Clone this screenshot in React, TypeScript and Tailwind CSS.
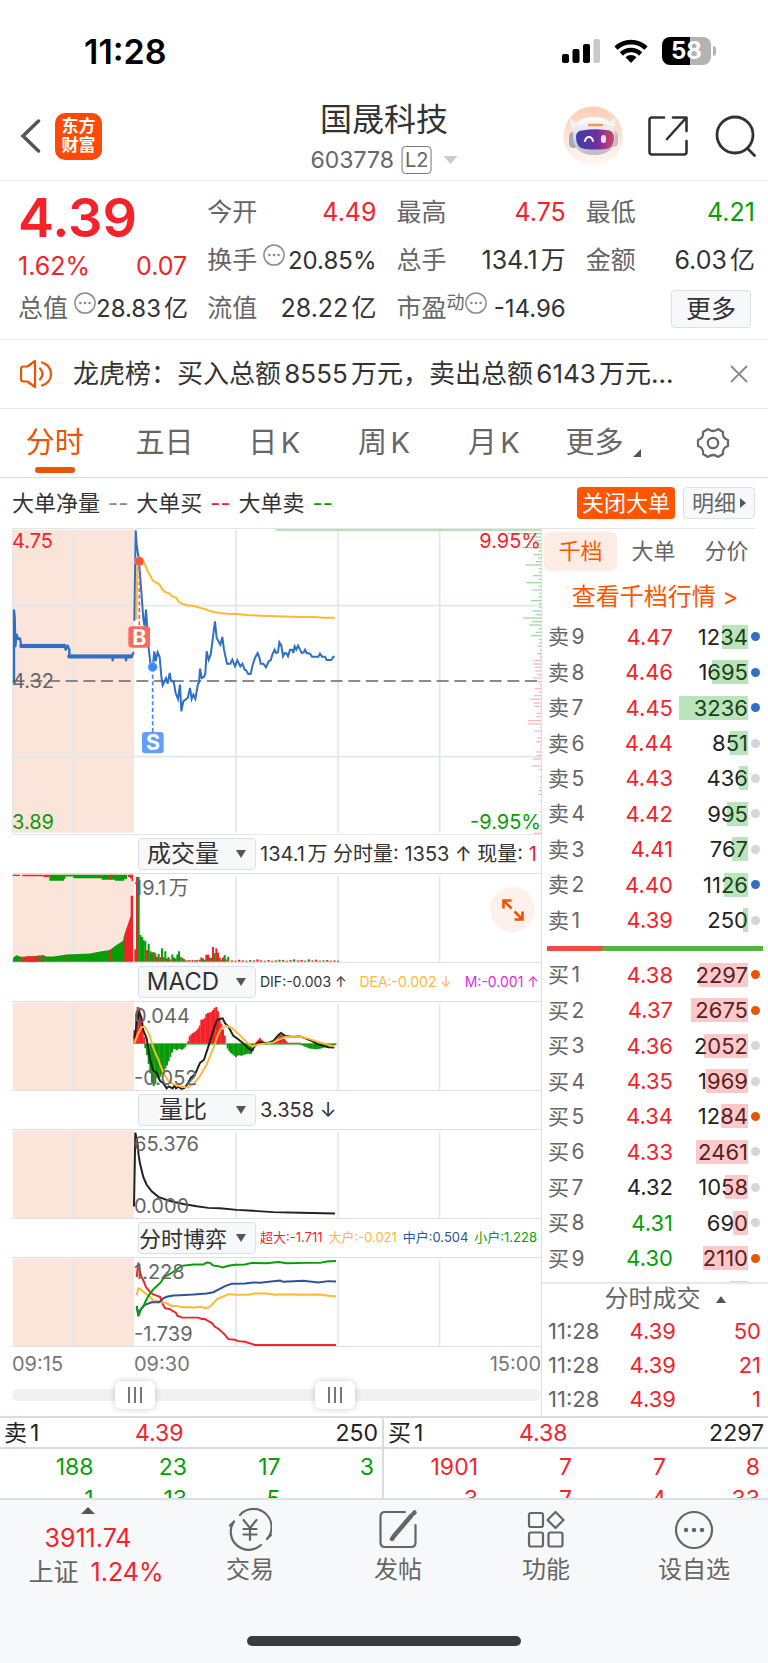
import { ReactNode } from "react";

type Point = [number, number];

const stats = [
  [
    { label: "今开", value: "4.49", color: "text-[#f5222a]" },
    { label: "换手", value: "20.85%", color: "text-[#333]", hint: true },
    { label: "流值", value: "28.22亿", color: "text-[#333]" },
  ],
  [
    { label: "最高", value: "4.75", color: "text-[#f5222a]" },
    { label: "总手", value: "134.1万", color: "text-[#333]" },
    { label: "市盈", sup: "动", value: "-14.96", color: "text-[#333]", hint: true },
  ],
  [
    { label: "最低", value: "4.21", color: "text-[#089d08]" },
    { label: "金额", value: "6.03亿", color: "text-[#333]" },
  ],
];

const periods = ["分时", "五日", "日K", "周K", "月K"];

const BLUE = "bg-[#2f6fc4]";
const ORANGE = "bg-[#ea5504]";
const GRAY = "bg-[#d3d6dc]";
const RED_TEXT = "text-[#f5222a]";
const GREEN_TEXT = "text-[#089d08]";

const sells = [
  { name: "卖9", price: "4.47", qty: 1234, color: RED_TEXT, dot: BLUE },
  { name: "卖8", price: "4.46", qty: 1695, color: RED_TEXT, dot: BLUE },
  { name: "卖7", price: "4.45", qty: 3236, color: RED_TEXT, dot: BLUE },
  { name: "卖6", price: "4.44", qty: 851, color: RED_TEXT, dot: GRAY },
  { name: "卖5", price: "4.43", qty: 436, color: RED_TEXT, dot: GRAY },
  { name: "卖4", price: "4.42", qty: 995, color: RED_TEXT, dot: GRAY },
  { name: "卖3", price: "4.41", qty: 767, color: RED_TEXT, dot: GRAY },
  { name: "卖2", price: "4.40", qty: 1126, color: RED_TEXT, dot: BLUE },
  { name: "卖1", price: "4.39", qty: 250, color: RED_TEXT, dot: GRAY },
];

const buys = [
  { name: "买1", price: "4.38", qty: 2297, color: RED_TEXT, dot: ORANGE },
  { name: "买2", price: "4.37", qty: 2675, color: RED_TEXT, dot: ORANGE },
  { name: "买3", price: "4.36", qty: 2052, color: RED_TEXT, dot: GRAY },
  { name: "买4", price: "4.35", qty: 1969, color: RED_TEXT, dot: GRAY },
  { name: "买5", price: "4.34", qty: 1284, color: RED_TEXT, dot: ORANGE },
  { name: "买6", price: "4.33", qty: 2461, color: RED_TEXT, dot: GRAY },
  { name: "买7", price: "4.32", qty: 1058, color: "text-[#222]", dot: GRAY },
  { name: "买8", price: "4.31", qty: 690, color: GREEN_TEXT, dot: GRAY },
  { name: "买9", price: "4.30", qty: 2110, color: GREEN_TEXT, dot: ORANGE },
];

const trades = [
  { time: "11:28", price: "4.39", qty: 50 },
  { time: "11:28", price: "4.39", qty: 21 },
  { time: "11:28", price: "4.39", qty: 1 },
];

// Chart data, three units to a pixel.
const preMarket =
  "42,490 42,272 44,292 46,380 50,345 54,358 60,356 64,379 195,379 197,390 203,378 208,390 208,410 337,410 338,422 340,410 377,410 378,422 380,410 395,410 400,400 403,400";
const priceLine =
  "403,303 407,32 410,75 417,125 424,215 430,300 434,320 438,270 442,330 446,385 452,440 458,445 463,395 467,425 473,398 479,412 484,470 488,497 498,475 503,492 509,460 513,484 521,486 527,520 534,538 540,495 544,575 550,545 563,535 570,505 575,538 580,525 586,538 594,492 597,490 600,447 605,475 612,472 616,460 620,395 626,420 632,405 638,360 645,305 650,355 661,375 667,352 672,390 681,432 691,432 697,420 705,440 712,422 721,440 727,432 734,450 738,452 745,463 752,463 758,435 765,415 773,400 778,412 782,432 790,432 798,443 806,425 812,422 818,402 824,390 828,400 834,398 838,368 844,378 849,410 854,400 860,402 864,410 870,390 877,390 880,400 884,380 889,390 894,378 900,390 905,400 911,398 915,390 920,400 930,402 936,411 955,411 960,402 966,411 975,411 980,421 994,421 1000,411 1004,411";
const averageLine =
  "409,300 412,140 415,108 430,125 445,158 458,182 470,190 478,194 485,206 495,217 508,222 518,231 528,234 535,245 545,252 560,256 585,260 605,266 615,268 625,272 640,277 660,280 685,282 710,283 740,286 780,288 830,290 900,292 940,292 970,294 1004,294";

// [y, length] of the chips profile drawn from the right edge
const profileGreen: Point[] = [
  [31, 796], [42, 100], [52, 30], [63, 20], [73, 12], [84, 56], [94, 8], [105, 22], [115, 10], [126, 16],
  [136, 46], [147, 6], [158, 7], [168, 24], [179, 7], [189, 44], [200, 8], [211, 26], [221, 6], [232, 8],
  [243, 31], [253, 8], [263, 6], [274, 26], [285, 14], [295, 54], [306, 27], [316, 35], [327, 8], [338, 16],
  [348, 30], [359, 6], [370, 5], [380, 10], [391, 4], [402, 11], [412, 3],
];
const profileRed: Point[] = [
  [422, 22], [433, 25], [443, 19], [454, 18], [465, 12], [475, 24], [486, 10], [496, 4], [507, 19], [517, 7],
  [528, 21], [539, 31], [550, 22], [560, 20], [570, 3], [581, 13], [591, 14], [603, 40], [613, 38], [623, 3],
  [634, 20], [645, 3], [655, 10], [666, 16], [676, 3], [686, 3], [697, 15], [708, 13], [718, 25], [739, 27],
  [750, 7], [771, 3], [782, 3], [803, 5], [813, 8], [824, 9], [845, 3], [876, 3], [919, 3], [930, 4], [941, 21],
];

// [x, top, is red]
const volumes: [number, number, number][] = [
  [403, 360, 1], [408, 138, 1], [413, 138, 0], [418, 316, 0], [423, 322, 0], [428, 332, 0], [433, 335, 0],
  [438, 363, 1], [443, 343, 0], [448, 366, 0], [453, 370, 0], [458, 368, 1], [463, 372, 0], [468, 383, 1],
  [473, 374, 0], [478, 384, 1], [483, 357, 0], [488, 384, 0], [493, 366, 0], [498, 388, 1], [503, 384, 0],
  [508, 391, 1], [514, 376, 0], [519, 385, 0], [524, 388, 1], [529, 376, 0], [534, 366, 0], [539, 384, 0],
  [544, 386, 1], [549, 390, 0], [554, 394, 0], [560, 394, 1], [566, 393, 1], [575, 393, 1], [582, 394, 0],
  [588, 393, 1], [596, 392, 1], [601, 385, 1], [606, 388, 0], [611, 392, 0], [616, 377, 1], [621, 376, 1],
  [626, 385, 1], [631, 386, 0], [636, 353, 1], [641, 372, 0], [646, 357, 1], [651, 370, 1], [656, 386, 1],
  [661, 391, 0], [666, 385, 1], [671, 378, 0], [676, 391, 1], [682, 383, 0],
];
const tailVolumes = [3, 2, 5, 3, 2, 4, 3, 6, 3, 2, 4, 2, 3, 5, 4, 2, 4, 6, 3, 4, 2, 6, 3, 5, 2, 3, 4, 2, 3, 2];

const macdAreas: { color: string; points: Point[] }[] = [
  { color: "#f5222a", points: [[403, 600], [408, 550], [413, 528], [418, 530], [423, 560], [428, 590], [433, 620]] },
  {
    color: "#089d08",
    points: [
      [436, 655], [442, 680], [452, 738], [457, 765], [460, 772], [466, 765], [471, 745], [476, 750], [492, 725],
      [500, 710], [508, 690], [516, 668], [522, 655], [530, 662], [538, 655], [545, 660], [553, 655], [560, 645],
    ],
  },
  {
    color: "#f5222a",
    points: [
      [564, 634], [570, 615], [580, 608], [590, 600], [598, 590], [603, 567], [612, 567], [620, 548], [635, 543],
      [645, 530], [650, 528], [655, 545], [660, 565], [667, 590], [673, 612], [678, 630],
    ],
  },
  {
    color: "#089d08",
    points: [[683, 656], [690, 668], [700, 675], [708, 682], [715, 676], [725, 678], [740, 672], [755, 672], [762, 655]],
  },
  {
    color: "#f5222a",
    points: [[765, 640], [773, 630], [780, 624], [788, 632], [796, 638], [815, 637], [830, 628], [842, 612], [850, 618], [855, 628], [863, 638], [900, 638]],
  },
  { color: "#089d08", points: [[905, 645], [915, 650], [930, 656], [950, 658], [965, 655], [980, 650], [1008, 644]] },
];
const difLine =
  "403,625 410,580 418,545 424,560 430,600 440,625 450,690 460,725 470,730 480,755 490,762 500,778 506,772 518,778 523,770 528,778 535,773 545,780 553,777 562,765 573,745 585,735 600,700 612,690 625,650 640,600 650,570 658,565 668,563 675,578 685,588 700,617 712,625 730,640 745,655 755,662 765,648 778,636 800,640 820,632 835,615 843,608 855,617 880,620 897,618 912,623 935,632 955,643 985,652 1003,653";
const deaLine =
  "403,640 412,615 425,590 435,590 447,610 460,655 475,690 490,730 505,755 520,765 540,772 562,775 580,765 600,740 620,705 640,655 655,610 665,592 680,586 695,592 715,610 740,637 758,650 775,643 800,640 820,637 840,627 855,620 897,619 920,624 950,634 980,643 1005,650";
const ratioLine =
  "402,352 406,125 412,155 416,195 420,220 430,262 440,285 455,305 475,322 510,335 550,344 590,351 625,356 660,357 710,362 760,365 820,369 900,371 1005,373";

const gameLines = [
  {
    color: "#f5222a",
    points:
      "410,560 415,515 420,545 425,560 430,570 438,590 450,605 458,612 472,617 480,620 487,640 495,655 510,658 520,665 527,668 532,678 547,684 595,684 605,688 615,688 625,695 635,700 645,712 655,718 668,730 675,737 685,750 705,752 715,756 735,758 750,763 765,768 1008,768",
  },
  {
    color: "#ffb833",
    points:
      "410,615 415,594 422,597 430,605 440,612 450,620 460,632 475,633 485,637 500,640 515,648 530,648 545,652 560,652 580,653 605,651 615,655 628,652 640,640 652,626 668,620 685,612 710,614 745,614 765,610 800,610 825,614 870,612 900,614 960,613 985,617 1008,619",
  },
  {
    color: "#2b549c",
    points:
      "410,648 415,670 425,655 435,645 455,637 478,637 490,625 500,620 520,616 540,615 580,613 620,610 640,606 655,598 675,587 695,580 735,579 760,576 780,577 840,570 850,574 910,571 955,576 985,572 1008,573",
  },
  {
    color: "#089d08",
    points:
      "410,650 415,680 422,660 432,645 440,627 450,610 462,595 475,583 483,575 492,560 510,550 525,540 545,525 580,521 610,521 620,515 630,516 640,524 655,526 668,530 685,525 705,522 735,521 755,516 800,517 835,513 860,517 920,516 960,516 980,512 1008,510",
  },
];

function heightAt(points: Point[], x: number) {
  for (let i = 1; i < points.length; i++) {
    const [x0, y0] = points[i - 1];
    const [x1, y1] = points[i];
    if (x <= x1) return y0 + ((y1 - y0) * (x - x0)) / (x1 - x0);
  }
  return points[points.length - 1][1];
}

function MacdBars({ color, points }: { color: string; points: Point[] }) {
  const bars = [];
  const end = points[points.length - 1][0];
  for (let x = points[0][0]; x <= end; x += 5) {
    const y = heightAt(points, x);
    bars.push(
      <rect key={x} x={x - 3} y={Math.min(y, 641)} width={6} height={Math.max(Math.abs(y - 641), 2)} fill={color} />
    );
  }
  return <g>{bars}</g>;
}

function Grid({ top, bottom }: { top: number; bottom: number }) {
  return (
    <>
      <rect x={38} y={top + 1} width={364} height={bottom - top} fill="#fbe5da" />
      <g stroke="#e3e6ec" strokeWidth={5}>
        {[219, 708, 1014, 1319].map((x) => (
          <line key={x} x1={x} x2={x} y1={top + 8} y2={bottom} />
        ))}
      </g>
    </>
  );
}

function SubChart({ top, high, low, children }: { top: number; high: string; low?: string; children: ReactNode }) {
  return (
    <div className="relative h-[90px] border-y border-[#dcdfe6]">
      <svg
        className="block w-full h-full overflow-visible"
        viewBox={`36 ${top} 1587 270`}
        preserveAspectRatio="none"
        aria-hidden="true"
      >
        <Grid top={top} bottom={top + 270} />
        {children}
      </svg>
      <span className="absolute left-[122px] top-0.5 text-xl leading-6 text-[#666]">{high}</span>
      {low && <span className="absolute left-[122px] bottom-0 text-xl leading-6 text-[#666]">{low}</span>}
    </div>
  );
}

function Indicator({ name, children }: { name: string; children: ReactNode }) {
  return (
    <div className="flex items-center gap-1 h-[38px] pl-[126px] whitespace-nowrap">
      <div className="relative shrink-0">
        <select
          aria-label={name}
          className={`block appearance-none w-[118px] h-8 pr-7 border border-[#dcdfe6] rounded bg-[#f7f8fa] text-[#333] [text-align-last:center] ${
            name.length > 4 || name === "分时博弈" ? "text-[22px]" : "text-2xl leading-none"
          }`}
        >
          <option>{name}</option>
        </select>
        <svg viewBox="0 0 10 10" className="absolute right-2.5 top-[11px] w-2.5 h-2.5 pointer-events-none" aria-hidden="true">
          <path d="M0 1h10L5 9z" fill="#555" />
        </svg>
      </div>
      {children}
    </div>
  );
}

function Hint() {
  return (
    <svg viewBox="0 0 24 24" className="w-[22px] h-[22px] shrink-0 -mt-3" aria-hidden="true">
      <circle cx="12" cy="12" r="11" fill="none" stroke="#8a8a8a" strokeWidth="1.6" />
      <g fill="#8a8a8a">
        <circle cx="7" cy="12" r="1.4" />
        <circle cx="12" cy="12" r="1.4" />
        <circle cx="17" cy="12" r="1.4" />
      </g>
    </svg>
  );
}

function StatusBar() {
  return (
    <div className="flex items-center justify-between h-[102px] pl-[84px] pr-[52px]">
      <span className="text-[34px] font-semibold text-black">11:28</span>
      <div className="flex items-center gap-[14px]">
        <svg viewBox="0 0 38 24" className="w-[38px] h-6" aria-hidden="true">
          <rect x="0" y="15" width="7" height="9" rx="2" />
          <rect x="10.500" y="10" width="7" height="14" rx="2" />
          <rect x="21" y="5" width="7" height="19" rx="2" />
          <rect x="31.500" y="0" width="6.500" height="24" rx="2" fill="#c9c9c9" />
        </svg>
        <svg viewBox="0 0 34 24" className="w-[34px] h-6" aria-hidden="true">
          <g fill="none" stroke="#000" strokeWidth="4.600">
            <path d="M2 9.200a21.500 21.500 0 0 1 30 0" />
            <path d="M7.400 15a13.600 13.600 0 0 1 19.200 0" />
          </g>
          <path d="M11.500 18.200a8 8 0 0 1 11 0L17 24z" />
        </svg>
        <div className="flex items-center gap-0.5">
          <span className="flex items-center justify-center w-[49px] h-7 rounded-lg bg-linear-to-r from-black from-57% to-[#b3b3b3] to-57% text-white text-2xl font-bold">
            58
          </span>
          <span className="w-[3px] h-2.5 rounded-r-full bg-[#b3b3b3]" />
        </div>
      </div>
    </div>
  );
}

function Robot() {
  return (
    <svg viewBox="0 0 60 60" className="w-[60px] h-[60px]" aria-hidden="true">
      <defs>
        <linearGradient id="halo" x1="0" y1="0" x2="0" y2="1">
          <stop offset="0" stopColor="#ffcdb4" />
          <stop offset="1" stopColor="#fff8f4" />
        </linearGradient>
        <linearGradient id="visor" x1="0" y1="0" x2="1" y2="0">
          <stop offset="0" stopColor="#3b3fae" />
          <stop offset="0.550" stopColor="#6d2fa0" />
          <stop offset="1" stopColor="#d8455d" />
        </linearGradient>
        <linearGradient id="shell" x1="0" y1="0" x2="0" y2="1">
          <stop offset="0" stopColor="#ffffff" />
          <stop offset="1" stopColor="#b9b9c8" />
        </linearGradient>
      </defs>
      <circle cx="30" cy="30" r="29.500" fill="url(#halo)" />
      <path d="M8 12q-3 9 4 12l5-7q-7 0-9-5zM51 11q4 9-3 12l-5-7q7 0 8-5z" fill="#f7f2f2" />
      <rect x="6" y="26" width="9" height="16" rx="4.500" fill="#a9a9bb" />
      <rect x="46" y="25" width="9" height="16" rx="4.500" fill="#c2bccb" />
      <path d="M10 31Q9 11 31 11q20 0 21 18 1 19-20 20-21 0-22-18z" fill="url(#shell)" />
      <path d="M13 31q0-6 6-6.500 12-2 24-0.500 8 0 8 8 0 10-8 11-11 1-21 0-9-1-9-12z" fill="url(#visor)" />
      <path d="M22 35q1-4 4-4 3 0 4 4" fill="none" stroke="#fff" strokeWidth="2" strokeLinecap="round" />
      <rect x="38" y="29" width="5" height="8" rx="2.500" fill="#f3d5ff" />
      <path d="M26 19h13" stroke="#f19a4c" strokeWidth="2.500" strokeLinecap="round" />
    </svg>
  );
}

function Header() {
  return (
    <header className="relative flex items-center justify-between h-[79px] pb-[10px] pl-5 pr-[11px] border-b border-[#e6e6e6]">
      <div className="flex items-center gap-[14px]">
        <button type="button" aria-label="返回">
          <svg viewBox="0 0 21 34" className="w-[21px] h-[34px]" fill="none" stroke="#555" strokeWidth="3.500" strokeLinecap="round">
            <path d="M18.500 2L3 17l15.500 15" />
          </svg>
        </button>
        <a
          href="#home"
          className="flex flex-col items-center justify-center w-[47px] h-[47px] rounded-[10px] bg-[#ff4a05] text-white text-[17px] leading-[19px] font-bold"
        >
          <span>东方</span>
          <span>财富</span>
        </a>
      </div>
      <div className="absolute left-1/2 top-0 -translate-x-1/2 flex flex-col items-center">
        <h1 className="text-[32px] leading-9 text-[#333]">国晟科技</h1>
        <div className="flex items-center gap-2 h-11 text-[23px] text-[#666]">
          <span>603778</span>
          <span className="flex items-center h-7 px-0.5 border border-[#777] rounded text-[20px]">L2</span>
          <svg viewBox="0 0 14 8" className="ml-1 w-[14px] h-2" aria-hidden="true">
            <path d="M0 0h14L7 8z" fill="#ccc" />
          </svg>
        </div>
      </div>
      <div className="flex items-center">
        <Robot />
        <button type="button" aria-label="分享" className="ml-6">
          <svg viewBox="0 0 42 42" className="w-[42px] h-[42px]" fill="none" stroke="#333" strokeWidth="2.600" strokeLinecap="round" strokeLinejoin="round">
            <path d="M17 2.500H5Q2.500 2.500 2.500 5v32q0 2.500 2.500 2.500h32q2.500 0 2.500-2.500V26" />
            <path d="M26 2.500h13.500V16M39 3L20 24" />
          </svg>
        </button>
        <button type="button" aria-label="搜索" className="ml-[26px]">
          <svg viewBox="0 0 42 42" className="w-[42px] h-[42px]" fill="none" stroke="#333" strokeWidth="2.800" strokeLinecap="round">
            <circle cx="20" cy="20" r="18" />
            <path d="M32.500 33.500l7 7" />
          </svg>
        </button>
      </div>
    </header>
  );
}

function Quote() {
  return (
    <section className="grid grid-cols-4 gap-5 pt-2 pb-1.5 pl-[18px] pr-[13px] border-b border-[#e6e6e6] text-[25px] whitespace-nowrap">
      <div>
        <div className="flex items-center h-14 text-[54px] font-semibold text-[#f5222a]">4.39</div>
        <div className="flex items-center justify-between h-11 text-[#f5222a]">
          <span>1.62%</span>
          <span>0.07</span>
        </div>
        <div className="flex items-center h-10">
          <span className="text-[#666]">总值</span>
          <span className="ml-1.5 flex">
            <Hint />
          </span>
          <span className="ml-auto text-2xl text-[#333]">28.83亿</span>
        </div>
      </div>
      {stats.map((column, i) => (
        <dl key={i}>
          {column.map((item) => (
            <div key={item.label} className="flex items-center h-12">
              <dt className="flex items-center text-[#666]">
                {item.label}
                {item.sup && <span className="text-lg -mt-3">{item.sup}</span>}
              </dt>
              {item.hint && (
                <span className={item.sup ? "flex" : "ml-1.5 flex"}>
                  <Hint />
                </span>
              )}
              <dd className={item.hint ? `ml-auto text-2xl ${item.color}` : `ml-auto ${item.color}`}>{item.value}</dd>
            </div>
          ))}
          {i === 2 && (
            <div className="flex items-center justify-end h-12 pr-1">
              <button type="button" className="w-20 h-[38px] border border-[#dcdfe6] rounded bg-[#f7f8fa] leading-none text-[#333]">
                更多
              </button>
            </div>
          )}
        </dl>
      ))}
    </section>
  );
}

function Notice() {
  return (
    <div className="flex items-center h-[69px] pl-5 pr-5 border-b border-[#e6e6e6]">
      <svg viewBox="0 0 34 30" className="shrink-0 w-[34px] h-[30px]" fill="none" stroke="#ea5504" strokeWidth="2.200" strokeLinejoin="round" strokeLinecap="round" aria-hidden="true">
        <path d="M15 2L7.500 7.500H3.500Q1 7.500 1 10v10q0 2.500 2.500 2.500h4L15 28z" />
        <path d="M20 9.500q5 5.500 0 11M22 3.500q9 3 9 11.500t-9 11.500" />
      </svg>
      <p className="ml-[19px] flex-1 truncate text-[26px] leading-9 text-[#333]">龙虎榜：买入总额8555万元，卖出总额6143万元...</p>
      <button type="button" aria-label="关闭">
        <svg viewBox="0 0 18 18" className="w-[18px] h-[18px]" stroke="#888" strokeWidth="1.800">
          <path d="M1 1l16 16M17 1L1 17" />
        </svg>
      </button>
    </div>
  );
}

function PeriodTabs() {
  return (
    <nav className="grid grid-cols-7 h-[69px] border-b border-[#d8dbe2] text-[29px] text-[#666]">
      {periods.map((name, i) => (
        <button key={name} type="button" className={i === 0 ? "relative text-[#ea5504]" : "relative"}>
          {name}
          {i === 0 && <span className="absolute left-1/2 bottom-1 -translate-x-1/2 w-10 h-1.5 rounded-full bg-[#ea5504]" />}
        </button>
      ))}
      <button type="button" className="flex items-center justify-center gap-2.5">
        更多
        <svg viewBox="0 0 8 8" className="mt-5 w-2 h-2" aria-hidden="true">
          <path d="M8 0v8H0z" fill="#555" />
        </svg>
      </button>
      <button type="button" aria-label="设置" className="flex items-center justify-center">
        <svg viewBox="0 0 34 32" className="w-[34px] h-8" fill="none" stroke="#666" strokeWidth="2.200" strokeLinejoin="round">
          <path d="M12 2q5 4 10 0l5 3q-1 6 5 8v6q-6 2-5 8l-5 3q-5-4-10 0l-5-3q1-6-5-8v-6q6-2 5-8z" />
          <circle cx="17" cy="16" r="5.200" />
        </svg>
      </button>
    </nav>
  );
}

function BigOrders() {
  return (
    <div className="flex items-center justify-between h-[50px] pl-3 pr-[13px] text-[22px] text-[#333]">
      <div className="flex gap-2">
        <span>大单净量</span>
        <span className="text-[#888]">--</span>
        <span>大单买</span>
        <span className="text-[#f5222a]">--</span>
        <span>大单卖</span>
        <span className="text-[#089d08]">--</span>
      </div>
      <div className="flex gap-2">
        <button type="button" className="w-[98px] h-8 rounded bg-[#ff5500] leading-none text-white">
          关闭大单
        </button>
        <button type="button" className="flex items-center justify-center gap-1 w-[72px] h-8 border border-[#dcdfe6] rounded bg-[#f7f8fa] leading-none text-[#666]">
          明细
          <svg viewBox="0 0 6 10" className="w-1.5 h-2.5" aria-hidden="true">
            <path d="M0 0l6 5-6 5z" fill="#555" />
          </svg>
        </button>
      </div>
    </div>
  );
}

function PriceChart() {
  return (
    <div className="relative h-[307px] pt-px border-b border-[#e6e8ee] text-xl leading-6">
      <svg className="block w-full h-full" viewBox="36 28 1587 915" preserveAspectRatio="none" aria-hidden="true">
        <rect x={38} y={30} width={364} height={909} fill="#fbe5da" />
        <g stroke="#e3e6ec" strokeWidth={5}>
          {[219, 708, 1014, 1319].map((x) => (
            <line key={x} x1={x} x2={x} y1={30} y2={939} />
          ))}
          <path d="M38 30V940M38 258H1623M38 711H1623" />
        </g>
        <g strokeWidth={4}>
          {profileGreen.map(([y, length]) => (
            <line key={y} x1={1623 - length} x2={1623} y1={y} y2={y} stroke="#9fdb9f" />
          ))}
          {profileRed.map(([y, length]) => (
            <line key={y} x1={1623 - length} x2={1623} y1={y} y2={y} stroke="#fbb9bb" />
          ))}
        </g>
        <line x1={38} x2={1623} y1={484} y2={484} stroke="#666" strokeWidth={4} strokeDasharray="36 17" />
        <polyline points={averageLine} fill="none" stroke="#ffb833" strokeWidth={6} />
        <polyline points={preMarket} fill="none" stroke="#2f6fc4" strokeWidth={7} strokeLinejoin="round" />
        <path d="M64 379H195M208 410H395" stroke="#2f6fc4" strokeWidth={13} strokeDasharray="1 7" strokeLinecap="round" />
        <polyline points={priceLine} fill="none" stroke="#2f6fc4" strokeWidth={6} />
        <line x1={418} x2={418} y1={125} y2={322} stroke="#fa5a4b" strokeWidth={5} strokeDasharray="12 8" />
        <line x1={458} x2={458} y1={445} y2={640} stroke="#3a88fb" strokeWidth={5} strokeDasharray="12 8" />
        <circle cx={418} cy={125} r={14} fill="#f8562f" stroke="#ffb1a6" strokeWidth={2} />
        <circle cx={458} cy={442} r={14} fill="#3a88fb" stroke="#b5d2ff" strokeWidth={2} />
        <rect x={385} y={320} width={65} height={64} rx={10} fill="#fb6a5c" />
        <rect x={426} y={637} width={65} height={64} rx={10} fill="#60a0fc" />
        <g fill="#fff" fontSize={64} fontWeight={700} textAnchor="middle">
          <text x={418} y={375}>B</text>
          <text x={459} y={692}>S</text>
        </g>
      </svg>
      <span className="absolute left-0 top-px text-[#f5222a]">4.75</span>
      <span className="absolute right-0 top-px text-[#f5222a]">9.95%</span>
      <span className="absolute left-0 top-1/2 -translate-y-1/2 text-[#666]">4.32</span>
      <span className="absolute left-0 bottom-0 text-[#089d08]">3.89</span>
      <span className="absolute right-0 bottom-0 text-[#089d08]">-9.95%</span>
    </div>
  );
}

function VolumeChart() {
  return (
    <div className="relative">
      <SubChart top={129} high="19.1万">
        <path d="M38 131h22v4H38zM67 131h62v5H67zM130 131h18v7h-18z" fill="#f5222a" />
        <path d="M125 131h23v19h44v-6h4v-7h24v5h85v5h40v3h28v-6h8V131z" fill="#089d08" />
        <path d="M383 131h16v20h-4v-8h-5v-5h-7zM330 131h3v16h-3z" fill="#f5222a" />
        <path
          d="M38 398l2-13 10-7 15 6 65-6 10 4h20l40-6 70-3 30-6 30-5 15-12 15-10 10-7 3-18 7-20v103z"
          fill="#089d08"
        />
        <path
          d="M66 383h8v15h-8zM78 381h28v17H78zM109 381h3v17h-3zM115 379h4v19h-4zM122 380h3v18h-3zM127 378h5v20h-5zM194 377h3v21h-3zM329 361h4v37h-4zM371 320h3v78h-3zM378 300l14-42v-62h7v202h-21z"
          fill="#f5222a"
        />
        {volumes.map(([x, y, red]) => (
          <rect key={x} x={x} y={y} width={6} height={398 - y} fill={red ? "#f5222a" : "#089d08"} />
        ))}
        {tailVolumes.map((height, i) => (
          <rect key={i} x={692 + i * 11} y={397 - height} width={7} height={height + 1} fill={i % 4 === 1 ? "#089d08" : "#f5222a"} />
        ))}
      </SubChart>
      <button type="button" aria-label="全屏" className="absolute right-1.5 top-[14px] flex items-center justify-center w-[45px] h-[45px] rounded-full bg-[#fef0ea]">
        <svg viewBox="0 0 24 24" className="w-6 h-6" fill="none" stroke="#ea5504" strokeWidth="2.600">
          <path d="M2.500 10.500v-8h8M2.500 2.500l8 8M21.500 13.500v8h-8M21.500 21.500l-8-8" />
        </svg>
      </button>
    </div>
  );
}

const rangeClass =
  "absolute inset-x-0 top-0 w-full h-7 appearance-none bg-transparent pointer-events-none [&::-webkit-slider-thumb]:appearance-none [&::-webkit-slider-thumb]:pointer-events-auto [&::-webkit-slider-thumb]:w-10 [&::-webkit-slider-thumb]:h-7 [&::-webkit-slider-thumb]:rounded-md [&::-webkit-slider-thumb]:shadow-[0_0_6px_rgba(0,0,0,0.2)] [&::-webkit-slider-thumb]:bg-white [&::-webkit-slider-thumb]:bg-[repeating-linear-gradient(90deg,#777_0_2px,transparent_2px_6px)] [&::-webkit-slider-thumb]:bg-size-[14px_16px] [&::-webkit-slider-thumb]:bg-center [&::-webkit-slider-thumb]:bg-no-repeat";

function Charts() {
  return (
    <div className="flex-1 min-w-0 pl-3 text-[#333]">
      <PriceChart />
      <Indicator name="成交量">
        <span className="flex-1 overflow-hidden text-xl">
          134.1万 分时量: 1353 ↑ 现量: <span className="text-[#f5222a]">1</span>
        </span>
      </Indicator>
      <VolumeChart />
      <Indicator name="MACD">
        <div className="flex flex-1 justify-between pr-0.5 text-sm">
          <span>DIF:-0.003 ↑</span>
          <span className="text-[#ffb833]">DEA:-0.002 ↓</span>
          <span className="text-[#e428e4]">M:-0.001 ↑</span>
        </div>
      </Indicator>
      <SubChart top={513} high="0.044" low="-0.052">
        <line x1={433} x2={1010} y1={642} y2={642} stroke="#089d08" strokeWidth={3} />
        {macdAreas.map((area, i) => (
          <MacdBars key={i} {...area} />
        ))}
        <polyline points={difLine} fill="none" stroke="#222" strokeWidth={6} />
        <polyline points={deaLine} fill="none" stroke="#ffb833" strokeWidth={6} />
      </SubChart>
      <Indicator name="量比">
        <span className="text-xl">3.358 ↓</span>
      </Indicator>
      <SubChart top={117} high="65.376" low="0.000">
        <polyline points={ratioLine} fill="none" stroke="#222" strokeWidth={6} />
      </SubChart>
      <Indicator name="分时博弈">
        <div className="flex flex-1 justify-between pr-1 text-[13px]">
          <span className="text-[#f5222a]">超大:-1.711</span>
          <span className="text-[#ffb833]">大户:-0.021</span>
          <span className="text-[#2b549c]">中户:0.504</span>
          <span className="text-[#089d08]">小户:1.228</span>
        </div>
      </Indicator>
      <SubChart top={501} high="1.228" low="-1.739">
        {gameLines.map((line) => (
          <polyline key={line.color} points={line.points} fill="none" stroke={line.color} strokeWidth={6} />
        ))}
      </SubChart>
      <div className="flex h-[34px] items-center text-xl text-[#777]">
        <span className="w-[122px]">09:15</span>
        <span className="flex-1">09:30</span>
        <span>15:00</span>
      </div>
      <div className="relative h-7">
        <div className="absolute inset-x-0 top-2 h-3 rounded-full bg-[#f1f1f4]" />
        <input type="range" aria-label="开始时间" defaultValue={21} className={rangeClass} />
        <input type="range" aria-label="结束时间" defaultValue={62} className={rangeClass} />
      </div>
    </div>
  );
}

function BookTable({ rows, bar, label }: { rows: typeof sells; bar: string; label: string }) {
  return (
    <table aria-label={label} className="w-full h-[319px] table-fixed text-[22px] leading-none">
      <tbody>
        {rows.map((row) => (
          <tr key={row.name}>
            <td className="w-[60px] pl-1.5 text-[21px] text-[#666]">{row.name}</td>
            <td className={`text-right ${row.color}`}>{row.price}</td>
            <td className="relative w-[75px] text-right text-[#222]">
              {row.qty}
              <span
                className={`absolute right-0 top-1/2 -translate-y-1/2 h-6 ${bar}`}
                style={{ width: Math.round((row.qty / 3236) * 69) }}
              />
            </td>
            <td className="w-5 pl-[3px]">
              <span className={`block w-[9px] h-[9px] rounded-full ${row.dot}`} />
            </td>
          </tr>
        ))}
      </tbody>
    </table>
  );
}

function OrderBook() {
  return (
    <aside className="shrink-0 w-[227px] border-l border-[#dcdfe6]">
      <div className="flex items-center h-[47px] pl-0.5 text-[22px] text-[#666]">
        <button type="button" className="w-[73px] h-[39px] rounded-md bg-[#fdece4] text-[#ff5500]">
          千档
        </button>
        <button type="button" className="w-[73px]">大单</button>
        <button type="button" className="w-[73px]">分价</button>
      </div>
      <a href="#depth" className="flex items-center justify-center h-11 text-2xl text-[#ff5500]">
        查看千档行情 &gt;
      </a>
      <BookTable rows={sells} bar="bg-[#089d08]/27" label="卖盘" />
      <div className="flex items-center h-[19px] px-[5px] pt-0.5">
        <div className="flex-1 h-[5px] bg-[linear-gradient(120deg,#ee4a4a_26%,#58b440_26%)]" />
      </div>
      <BookTable rows={buys} bar="bg-[#f5222a]/25" label="买盘" />
      <div className="flex justify-end items-end h-1.5 pr-5">
        <span className="w-[18px] h-px bg-[#fcc8ca]" />
      </div>
      <button
        type="button"
        className="flex items-center justify-center gap-[15px] w-full h-8 pl-5 border-t-2 border-[#e6e8ee] text-2xl leading-none text-[#666]"
      >
        分时成交
        <svg viewBox="0 0 10 7" className="w-2.5 h-[7px]" aria-hidden="true">
          <path d="M0 7h10L5 0z" fill="#555" />
        </svg>
      </button>
      <table aria-label="分时成交" className="w-full table-fixed text-[22px] leading-none">
        <tbody>
          {trades.map((trade) => (
            <tr key={trade.qty} className="h-[34px]">
              <td className="w-[68px] pl-1.5 text-[#666]">{trade.time}</td>
              <td className="w-[66px] text-right text-[#f5222a]">{trade.price}</td>
              <td className="pr-[7px] text-right text-[#f5222a]">{trade.qty}</td>
            </tr>
          ))}
        </tbody>
      </table>
    </aside>
  );
}

const queues = [
  { name: "卖1", price: "4.39", total: "250", color: GREEN_TEXT, orders: [188, 23, 17, 3, 1, 13, 5] },
  { name: "买1", price: "4.38", total: "2297", color: RED_TEXT, orders: [1901, 7, 7, 8, 3, 7, 4, 33] },
];

function Queues() {
  return (
    <section className="grid grid-cols-2 border-t-2 border-[#d8dbe2] text-[23px] leading-8">
      {queues.map((queue, i) => (
        <div key={queue.name} className={i === 0 ? "border-r-2 border-[#d8dbe2]" : ""}>
          <div className="flex items-center h-[31px] pl-1 pr-1 border-b-2 border-[#d8dbe2] text-[#222]">
            <span className="w-[131px]">{queue.name}</span>
            <span className="flex-1 text-[#f5222a]">{queue.price}</span>
            <span>{queue.total}</span>
          </div>
          <div className={`grid grid-cols-4 h-[49px] pt-0.5 pr-2 overflow-hidden text-right ${queue.color}`}>
            {queue.orders.map((order, j) => (
              <span key={j}>{order}</span>
            ))}
          </div>
        </div>
      ))}
    </section>
  );
}

const actions = [
  {
    name: "交易",
    icon: (
      <>
        <path d="M12 7a18 18 0 0 1 27 24l4-4" />
        <path d="M33 37A18 18 0 0 1 6 13.500L2 17.500" />
        <path d="M15.500 12l6.500 8 6.500-8M22 20v12M15.500 21h13M15.500 26.500h13" />
      </>
    ),
  },
  {
    name: "发帖",
    icon: (
      <>
        <path d="M29 4H9Q4.500 4 4.500 8.500v26Q4.500 39 9 39h26q4.500 0 4.500-4.500V17" />
        <path d="M35 8L18 28l-2 3" strokeWidth="4.500" />
        <path d="M37.500 5.500l1-1" strokeWidth="4.500" />
      </>
    ),
  },
  {
    name: "功能",
    icon: (
      <>
        <rect x="5" y="5" width="14" height="14" rx="2" />
        <rect x="5" y="24.500" width="14" height="14" rx="2" />
        <rect x="24.500" y="24.500" width="14" height="14" rx="2" />
        <path d="M31.500 4l8 8-8 8-8-8z" />
      </>
    ),
  },
  {
    name: "设自选",
    icon: (
      <>
        <circle cx="22" cy="22" r="18" />
        <path d="M14 22h.01M22 22h.01M30 22h.01" strokeWidth="4.500" />
      </>
    ),
  },
];

function BottomBar() {
  return (
    <footer className="border-t-2 border-[#dcdfe6] bg-[#f7f8fa] text-2xl text-[#666]">
      <div className="flex h-[104px]">
        <a href="#index" className="flex flex-col items-center w-[176px] pt-[7px] text-[25px]">
          <svg viewBox="0 0 14 7" className="w-[14px] h-[7px]" aria-hidden="true">
            <path d="M0 7h14L7 0z" fill="#555" />
          </svg>
          <span className="mt-2 leading-8 text-[#f5222a]">3911.74</span>
          <span className="flex gap-3 pl-4 leading-9">
            <span>上证</span>
            <span className="text-[#f5222a]">1.24%</span>
          </span>
        </a>
        {actions.map((action) => (
          <button key={action.name} type="button" className="flex-1 flex flex-col items-center pt-2">
            <svg
              viewBox="0 0 44 44"
              className="w-11 h-11"
              fill="none"
              stroke="#666"
              strokeWidth="2.200"
              strokeLinecap="round"
              strokeLinejoin="round"
              aria-hidden="true"
            >
              {action.icon}
            </svg>
            <span className="leading-9">{action.name}</span>
          </button>
        ))}
      </div>
      <div className="flex justify-center pt-8 pb-[17px]">
        <div className="w-[274px] h-2.5 rounded-full bg-[#3b3b3b]" />
      </div>
    </footer>
  );
}

export default function App() {
  return (
    <div className="bg-white font-['Inter','Noto_Sans_CJK_SC',sans-serif] [text-autospace:normal]">
      <StatusBar />
      <Header />
      <Quote />
      <Notice />
      <PeriodTabs />
      <BigOrders />
      <div className="relative flex">
        <div className="absolute left-3 right-[13px] top-0 h-px bg-[#e3e5ea]" />
        <Charts />
        <OrderBook />
      </div>
      <Queues />
      <BottomBar />
    </div>
  );
}
